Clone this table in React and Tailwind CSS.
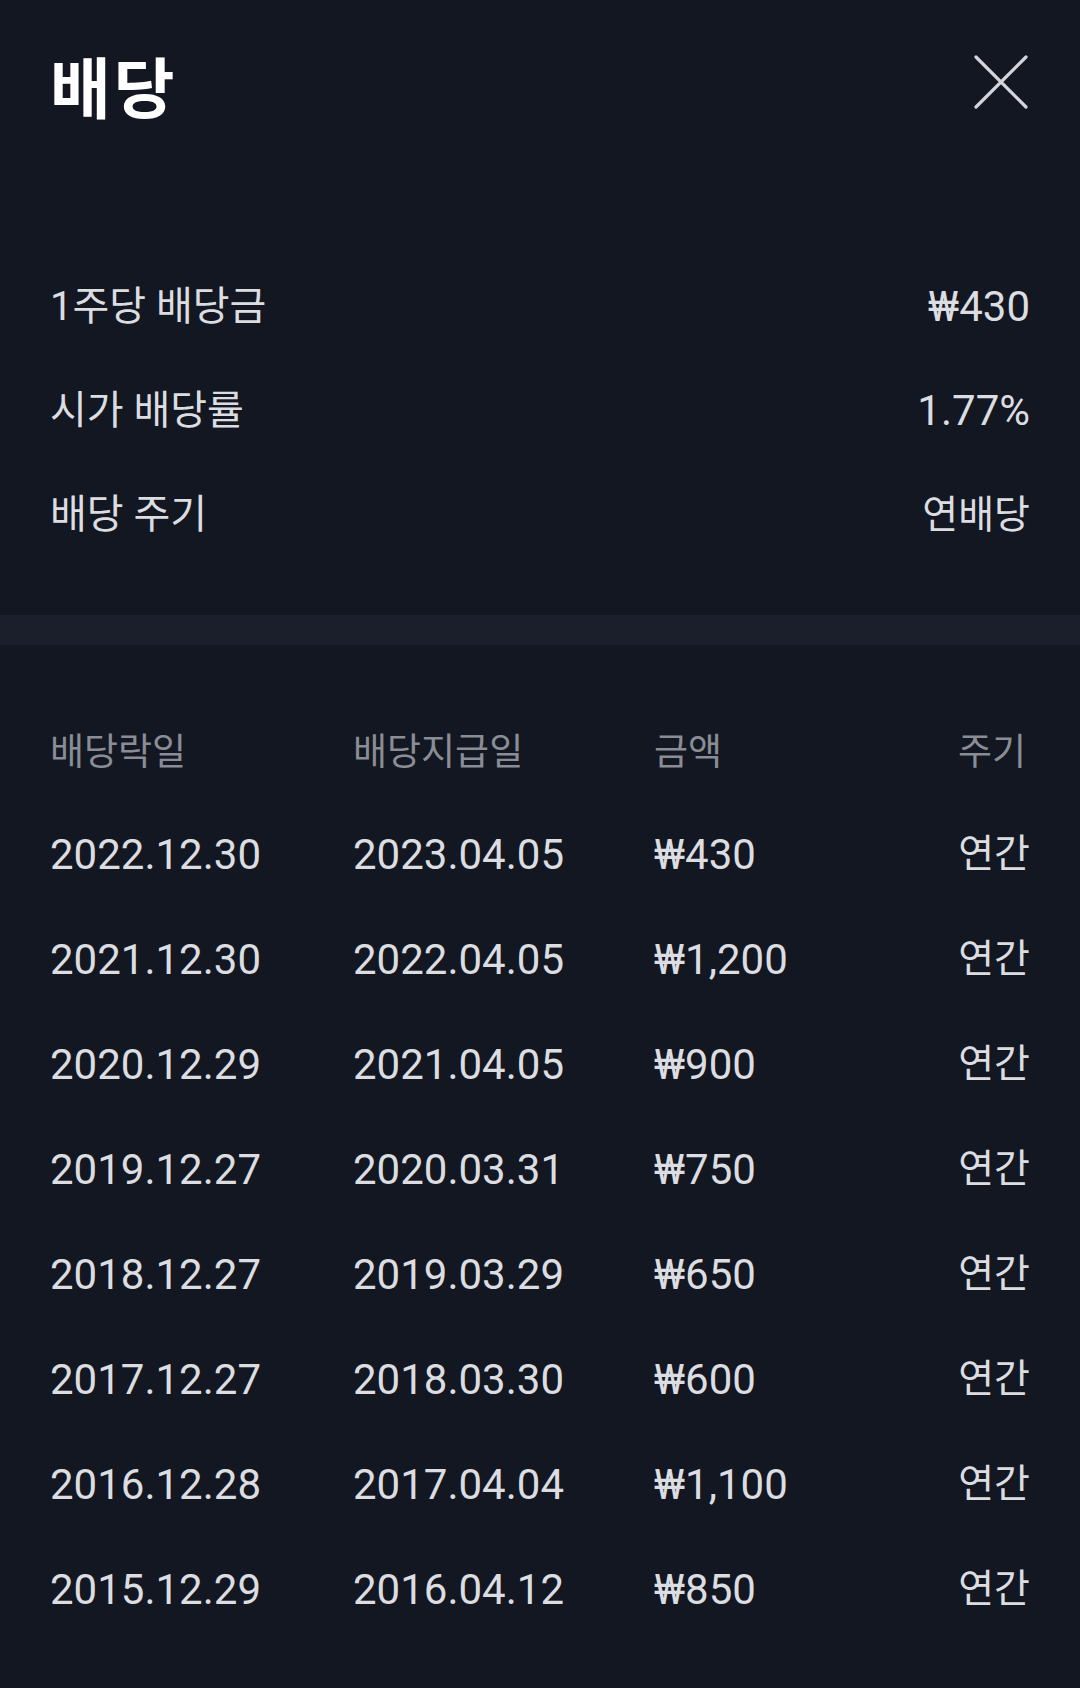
import React from "react";

const FONT = { fontFamily: "Roboto, 'Noto Sans CJK KR', 'Noto Sans', sans-serif" };

const info = [
  ["1주당 배당금", "₩430"],
  ["시가 배당률", "1.77%"],
  ["배당 주기", "연배당"],
];

const rows = [
  ["2022.12.30", "2023.04.05", "₩430"],
  ["2021.12.30", "2022.04.05", "₩1,200"],
  ["2020.12.29", "2021.04.05", "₩900"],
  ["2019.12.27", "2020.03.31", "₩750"],
  ["2018.12.27", "2019.03.29", "₩650"],
  ["2017.12.27", "2018.03.30", "₩600"],
  ["2016.12.28", "2017.04.04", "₩1,100"],
  ["2015.12.29", "2016.04.12", "₩850"],
];

export default function App() {
  return (
    <div className="w-[1080px] h-[1688px] bg-[#131722] overflow-hidden" style={FONT}>
      <div className="h-[176px] flex items-center justify-between pl-[50px] pr-[52px]">
        <div className="text-white text-[66px] font-bold leading-none tracking-[3px] pt-[6px]">배당</div>
        <svg width="54" height="54" viewBox="0 0 54 54" className="mb-[12px]">
          <path d="M2 2 L52 52 M52 2 L2 52" stroke="#d4d4dc" strokeWidth="3.2" strokeLinecap="round" />
        </svg>
      </div>

      <div className="pt-[79px] pb-[48px] px-[50px]">
        {info.map(([k, v]) => (
          <div key={k} className="h-[104px] flex items-center justify-between text-[#dcdde0] leading-none">
            <span className="text-[40px]">{k}</span>
            <span className={/[가-힣]/.test(v) ? "text-[39px]" : "text-[42px]"}>{v}</span>
          </div>
        ))}
      </div>

      <div className="h-[30px] bg-[#1b1f2b]" />

      <div className="pt-[57px] px-[50px]">
        <div className="h-[100px] grid grid-cols-[303px_301px_1fr_auto] items-center text-[#8a8d95] text-[37px] leading-none">
          <span>배당락일</span>
          <span>배당지급일</span>
          <span>금액</span>
          <span className="pr-[4px]">주기</span>
        </div>
        {rows.map(([a, b, c]) => (
          <div key={a} className="h-[105px] grid grid-cols-[303px_301px_1fr_auto] items-center text-[#dcdde0] leading-none">
            <span className="text-[42px]">{a}</span>
            <span className="text-[42px]">{b}</span>
            <span className="text-[42px]">{c}</span>
            <span className="text-[39px]">연간</span>
          </div>
        ))}
      </div>
    </div>
  );
}
